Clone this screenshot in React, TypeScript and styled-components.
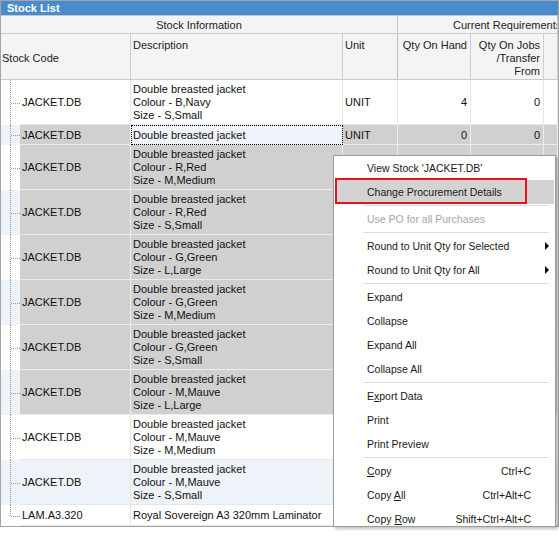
import React from "react";
import styled, { createGlobalStyle } from "styled-components";

interface StockRow {
  code: string;
  desc: string[];
  unit: string;
  onHand: string;
  onJobs: string;
  selected?: boolean;
  focused?: boolean;
}

const jacket = (colour: string, size: string, selected = true): StockRow => ({
  code: "JACKET.DB",
  desc: ["Double breasted jacket", `Colour - ${colour}`, `Size - ${size}`],
  unit: "UNIT",
  onHand: "0",
  onJobs: "0",
  selected,
});

const rows: StockRow[] = [
  { ...jacket("B,Navy", "S,Small", false), onHand: "4" },
  {
    code: "JACKET.DB",
    desc: ["Double breasted jacket"],
    unit: "UNIT",
    onHand: "0",
    onJobs: "0",
    selected: true,
    focused: true,
  },
  jacket("R,Red", "M,Medium"),
  jacket("R,Red", "S,Small"),
  jacket("G,Green", "L,Large"),
  jacket("G,Green", "M,Medium"),
  jacket("G,Green", "S,Small"),
  jacket("M,Mauve", "L,Large"),
  jacket("M,Mauve", "M,Medium", false),
  jacket("M,Mauve", "S,Small", false),
  {
    code: "LAM.A3.320",
    desc: ["Royal Sovereign A3 320mm Laminator"],
    unit: "",
    onHand: "",
    onJobs: "",
  },
];

type MenuEntry =
  | { kind: "sep" }
  | {
      kind: "item";
      label: React.ReactNode;
      shortcut?: string;
      submenu?: boolean;
      disabled?: boolean;
      active?: boolean;
    };

const menu: MenuEntry[] = [
  { kind: "item", label: "View Stock 'JACKET.DB'" },
  { kind: "item", label: "Change Procurement Details", active: true },
  { kind: "sep" },
  { kind: "item", label: "Use PO for all Purchases", disabled: true },
  { kind: "sep" },
  { kind: "item", label: "Round to Unit Qty for Selected", submenu: true },
  { kind: "item", label: "Round to Unit Qty for All", submenu: true },
  { kind: "sep" },
  { kind: "item", label: "Expand" },
  { kind: "item", label: "Collapse" },
  { kind: "item", label: "Expand All" },
  { kind: "item", label: "Collapse All" },
  { kind: "sep" },
  { kind: "item", label: <>E<u>x</u>port Data</> },
  { kind: "item", label: "Print" },
  { kind: "item", label: "Print Preview" },
  { kind: "sep" },
  { kind: "item", label: <><u>C</u>opy</>, shortcut: "Ctrl+C" },
  { kind: "item", label: <>Copy <u>A</u>ll</>, shortcut: "Ctrl+Alt+C" },
  { kind: "item", label: <>Copy <u>R</u>ow</>, shortcut: "Shift+Ctrl+Alt+C" },
];

const GlobalStyle = createGlobalStyle`
  html, body {
    margin: 0;
    padding: 0;
    background: #fff;
  }
  body {
    font-family: "Liberation Sans", Arial, sans-serif;
    font-size: 11px;
    color: #111;
  }
  * {
    box-sizing: border-box;
  }
`;

const Page = styled.div`
  position: relative;
  width: 559px;
  height: 535px;
`;

const Frame = styled.div`
  width: 559px;
  height: 527px;
  border: 1px solid #a5a5a5;
  display: flex;
  flex-direction: column;
  overflow: hidden;
  background: #fff;
`;

const TitleBar = styled.div`
  height: 15px;
  padding-left: 6px;
  background: #4a8ccb;
  border-bottom: 1px solid #c6c6c6;
  color: #fff;
  font-weight: bold;
  line-height: 14px;
`;

const GroupRow = styled.div`
  display: grid;
  grid-template-columns: 397px 1fr;
  height: 18px;
  background: #f4f4f4;
  border-bottom: 1px solid #c9c9c9;
`;

const GroupCell = styled.div<{ $indent?: number }>`
  border-right: 1px solid #c9c9c9;
  padding-top: 2px;
  line-height: 15px;
  white-space: nowrap;
  overflow: hidden;
  color: #222;
  text-align: ${(p) => (p.$indent ? "left" : "center")};
  padding-left: ${(p) => p.$indent ?? 0}px;
`;

const ColumnRow = styled.div`
  display: grid;
  grid-template-columns: 130px 212px 55px 73px 73px 1fr;
  height: 46px;
  background: #f4f4f4;
  border-bottom: 1px solid #c9c9c9;
`;

const HeaderCell = styled.div<{ $right?: boolean; $middle?: boolean; $thick?: boolean }>`
  display: flex;
  flex-direction: column;
  justify-content: ${(p) => (p.$middle ? "center" : "flex-start")};
  align-items: ${(p) => (p.$right ? "flex-end" : "flex-start")};
  text-align: ${(p) => (p.$right ? "right" : "left")};
  padding: ${(p) => (p.$middle ? "3px 3px 0 1px" : "5px 3px 0 2px")};
  border-right: 1px solid ${(p) => (p.$thick ? "#bdbdbd" : "#d0d0d0")};
  line-height: 13px;
  color: #222;
  white-space: nowrap;
`;

const Body = styled.div`
  flex: 1;
  display: flex;
  flex-direction: column;
`;

const Row = styled.div<{ $height: number }>`
  display: grid;
  grid-template-columns: 19px 111px 212px 55px 73px 73px 1fr;
  height: ${(p) => p.$height}px;
`;

const Gutter = styled.div<{ $alt: boolean; $last: boolean }>`
  position: relative;
  background: ${(p) => (p.$alt ? "#eef2f9" : "#fff")};

  &::before {
    content: "";
    position: absolute;
    left: 9px;
    top: 0;
    height: ${(p) => (p.$last ? "50%" : "100%")};
    border-left: 1px dotted #9a9a9a;
  }

  &::after {
    content: "";
    position: absolute;
    left: 10px;
    right: 0;
    top: 50%;
    border-top: 1px dotted #9a9a9a;
  }
`;

const Cell = styled.div<{
  $selected?: boolean;
  $alt?: boolean;
  $focused?: boolean;
  $right?: boolean;
}>`
  display: flex;
  flex-direction: column;
  justify-content: center;
  align-items: ${(p) => (p.$right ? "flex-end" : "flex-start")};
  padding: 1px 3px 0 2px;
  line-height: 13px;
  white-space: nowrap;
  overflow: hidden;
  color: #111;
  border-right: 1px solid ${(p) => (p.$selected ? "#ececec" : "#e6e6e6")};
  border-bottom: 1px solid ${(p) => (p.$selected ? "#ececec" : "#e6e6e6")};
  background: ${(p) =>
    p.$focused ? "#f0f4fa" : p.$selected ? "#d0d0d0" : p.$alt ? "#eef2f9" : "#fff"};
  outline: ${(p) => (p.$focused ? "1px dotted #000" : "none")};
  outline-offset: -1px;
`;

const Menu = styled.div`
  position: absolute;
  left: 333px;
  top: 155px;
  width: 223px;
  height: 372px;
  overflow: hidden;
  padding: 0 1px;
  background: #fff;
  border: 1px solid #9c9c9c;
  box-shadow: 2px 2px 3px rgba(0, 0, 0, 0.25);
  font-size: 10.5px;
`;

const MenuItem = styled.div<{ $active?: boolean; $disabled?: boolean }>`
  position: relative;
  display: flex;
  align-items: center;
  flex-shrink: 0;
  height: 24px;
  padding-left: 32px;
  white-space: nowrap;
  color: ${(p) => (p.$disabled ? "#a6a6a6" : "#1a1a1a")};
  background: ${(p) => (p.$active ? "#d3d3d3" : "transparent")};

  u {
    text-underline-offset: 1px;
  }
`;

const Shortcut = styled.span`
  margin-left: auto;
  margin-right: 23px;
`;

const SubArrow = styled.span`
  margin-left: auto;
  margin-right: 5px;
  width: 0;
  height: 0;
  border-left: 4px solid #000;
  border-top: 4px solid transparent;
  border-bottom: 4px solid transparent;
`;

const Separator = styled.div`
  height: 1px;
  margin: 1px 5px 1px 28px;
  background: #dedede;
`;

const Callout = styled.div`
  position: absolute;
  left: 0;
  top: -2px;
  width: 192px;
  height: 26px;
  border: 2px solid #e8121b;
  pointer-events: none;
`;

const rowHeight = (r: StockRow, i: number) =>
  r.desc.length > 1 ? 45 : i === rows.length - 1 ? 21 : 20;

const App = () => (
  <Page>
    <GlobalStyle />
    <Frame>
      <TitleBar>Stock List</TitleBar>
      <GroupRow>
        <GroupCell>Stock Information</GroupCell>
        <GroupCell $indent={55}>Current Requirements</GroupCell>
      </GroupRow>
      <ColumnRow>
        <HeaderCell $middle>Stock Code</HeaderCell>
        <HeaderCell>Description</HeaderCell>
        <HeaderCell $thick>Unit</HeaderCell>
        <HeaderCell $right>Qty On Hand</HeaderCell>
        <HeaderCell $right>
          <span>Qty On Jobs</span>
          <span>/Transfer</span>
          <span>From</span>
        </HeaderCell>
        <HeaderCell />
      </ColumnRow>
      <Body>
        {rows.map((r, i) => {
          const alt = i % 2 === 1;
          const common = { $selected: r.selected, $alt: alt };
          return (
            <Row key={i} $height={rowHeight(r, i)}>
              <Gutter $alt={alt} $last={i === rows.length - 1} />
              <Cell {...common}>{r.code}</Cell>
              <Cell {...common} $focused={r.focused}>
                {r.desc.map((d) => (
                  <span key={d}>{d}</span>
                ))}
              </Cell>
              <Cell {...common}>{r.unit}</Cell>
              <Cell {...common} $right>
                {r.onHand}
              </Cell>
              <Cell {...common} $right>
                {r.onJobs}
              </Cell>
              <Cell {...common} />
            </Row>
          );
        })}
      </Body>
    </Frame>
    <Menu>
      {menu.map((m, i) =>
        m.kind === "sep" ? (
          <Separator key={i} />
        ) : (
          <MenuItem key={i} $active={m.active} $disabled={m.disabled}>
            <span>{m.label}</span>
            {m.shortcut && <Shortcut>{m.shortcut}</Shortcut>}
            {m.submenu && <SubArrow />}
            {m.active && <Callout />}
          </MenuItem>
        )
      )}
    </Menu>
  </Page>
);

export default App;
